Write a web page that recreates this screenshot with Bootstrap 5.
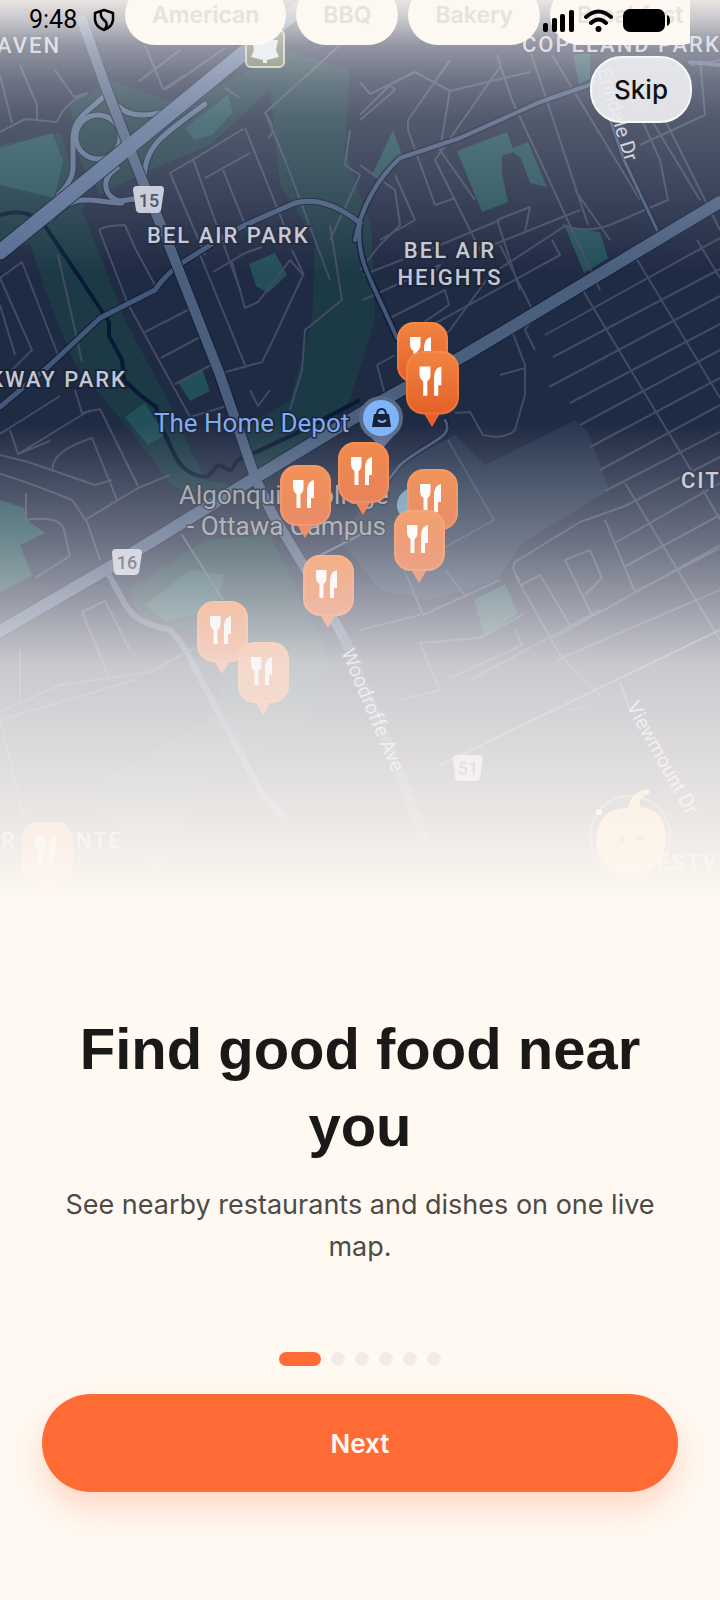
<!DOCTYPE html>
<html lang="en">
<head>
<meta charset="utf-8">
<meta name="viewport" content="width=device-width, initial-scale=1">
<title>Find good food near you</title>
<link href="https://cdn.jsdelivr.net/npm/bootstrap@5.3.0/dist/css/bootstrap.min.css" rel="stylesheet">
<style>
body{background:#fff9f2;color:#1a1918;font-family:Inter,"Liberation Sans",sans-serif}
.map-art{display:block;width:100%;height:auto}
.map-art text{font-family:Roboto,sans-serif}
.area{font-size:22px;font-weight:500;letter-spacing:2px;fill:#c3c7d3;stroke:#1c2438;stroke-width:4;paint-order:stroke}
.place{font-size:26px;stroke:#1c2438;stroke-width:3;paint-order:stroke}
.street{font-size:20px;fill:#c5cad8;stroke:#2a3248;stroke-width:2;paint-order:stroke}
.shield{font-size:18px;font-weight:500;fill:#3a4256;text-anchor:middle}
.minor{fill:none;stroke:#414b63;stroke-width:2;stroke-linejoin:round}
.status{height:40px;padding:0 49px 0 29px}
.clock{font:400 25px/40px Roboto,sans-serif;color:#000}
.chips{height:45px;padding-left:125px;margin-right:30px;gap:10px}
.chip{flex:none;height:60px;padding:0 27px;border:0;border-radius:30px;background:#fdf8f2;color:#e6e2de;font-size:23px;font-weight:600}
.skip-btn{top:56px;right:28px;width:102px;height:67px;border-radius:32px;border:2px solid #f8f8fa;background:rgba(236,237,240,.93);font-size:26px;font-weight:500;color:#111}
.headline{font:700 58px/77px "Liberation Sans",sans-serif;margin:0 0 20px}
.lede{font-size:27px;line-height:42px;color:#4d4a47;margin:0}
.copy{padding:100px 56px 84px}
.dots{gap:10px;margin-bottom:28px}
.dot{width:14px;height:14px;border-radius:7px;background:#f1ece7}
.dot.on{width:42px;background:#ff6b35}
.actions{padding:0 42px 108px}
.next-btn{height:98px;border:0;border-radius:49px;background:#ff6b35;color:#fff9f2;font-size:26px;font-weight:600;box-shadow:0 16px 32px rgba(255,107,53,.24)}
</style>
</head>
<body>
<main class="min-vh-100 d-flex flex-column">
<section class="position-relative overflow-hidden" aria-label="Live map">
<svg class="map-art" viewBox="0 0 720 910" role="img" aria-label="Map with restaurant pins">
<defs>
<linearGradient id="fade" x1="0" y1="0" x2="0" y2="910" gradientUnits="userSpaceOnUse">
<stop offset="0" stop-color="#fff9f2" stop-opacity=".9"/><stop offset=".02" stop-color="#fbf6f4" stop-opacity=".78"/>
<stop offset=".05" stop-color="#f6f2f6" stop-opacity=".54"/><stop offset=".09" stop-color="#f6f2f6" stop-opacity=".36"/>
<stop offset=".13" stop-color="#f6f2f6" stop-opacity=".24"/><stop offset=".22" stop-color="#f6f2f6" stop-opacity=".12"/>
<stop offset=".30" stop-color="#f6f2f6" stop-opacity="0"/><stop offset=".465" stop-color="#f6f2f6" stop-opacity="0"/>
<stop offset=".53" stop-color="#f6f2f6" stop-opacity=".18"/><stop offset=".6" stop-color="#f6f2f4" stop-opacity=".37"/>
<stop offset=".67" stop-color="#f6f2f4" stop-opacity=".6"/><stop offset=".73" stop-color="#f6f3f3" stop-opacity=".79"/>
<stop offset=".8" stop-color="#f8f4f3" stop-opacity=".85"/><stop offset=".88" stop-color="#fbf6f3" stop-opacity=".91"/>
<stop offset=".94" stop-color="#fdf7f2" stop-opacity=".96"/><stop offset=".99" stop-color="#fff9f2"/>
</linearGradient>
<linearGradient id="pinfill" x1="0" y1="0" x2="0" y2="1"><stop offset="0" stop-color="#f18440"/><stop offset="1" stop-color="#e4602a"/></linearGradient>
<g id="pin">
<path d="M16 58L25 73L34 58Z" fill="#e6622b"/>
<rect width="51" height="61" rx="17" fill="url(#pinfill)"/>
<rect x="1" y="1" width="49" height="59" rx="16" fill="none" stroke="#ff9a5c" stroke-opacity=".3" stroke-width="2"/>
<path d="M13 15H23.500V23Q23.500 27 20.500 29V43H16.500V29Q13 27 13 22Z" fill="#fff"/>
<path d="M34 15V33H31V43H27V24Q28 16 34 15Z" fill="#fff"/>
</g>
</defs>
<rect width="720" height="910" fill="#1f2a43"/>
<!-- parks and campus grounds -->
<g fill="#1c3a46">
<path d="M0 145L60 133L85 205L50 240L0 250Z"/>
<path d="M25 228L80 205L100 255L125 320L165 395L205 480L262 490L210 498L172 486L130 430L75 365L45 290Z"/>
<path d="M280 50L350 70L345 150L372 230L375 320L350 400L300 460L250 470L240 430L290 400L312 320L315 240L280 185L270 90Z"/>
<path d="M70 105L110 80L180 105L240 75L285 55L280 80L210 145L150 170L100 195L80 160Z"/>
<path d="M130 590L205 540L270 535L330 660L305 730L210 770L160 880L85 790L215 715L230 640L140 620Z"/>
</g>
<g fill="#234f58">
<path d="M0 148L52 133L63 160L55 198L0 185Z"/><path d="M0 500L24 508L27 520L45 533L20 545L32 576L0 592Z"/>
<path d="M185 128L228 95L233 112L212 135L195 140Z"/>
<path d="M249 264L275 253L287 275L268 293L256 286Z"/>
<path d="M178 382L202 369L210 391L190 401Z"/><path d="M125 417L145 403L165 435L148 445Z"/>
<path d="M393 130L404 160L380 180L372 175Z"/>
<path d="M457 151L507 132L513 148L528 142L547 187L530 183L521 158L513 152L502 156L502 173L508 202L482 212Z"/>
<path d="M565 227L600 232L608 258L584 273Z"/><path d="M573 55L590 53L590 79L579 84Z"/>
<path d="M551 436L570 428L582 459L562 467Z" fill="#2a6068"/><path d="M474 600L505 584L518 614L484 635Z"/>
<path d="M145 605L190 570L225 575L215 610L165 622Z"/>
</g>
<path d="M388 470L455 435L485 465L575 420L588 432L609 490L520 545L497 580L430 600L380 590L340 540Z" fill="#27374f"/>
<!-- creek -->
<g fill="none" stroke="#081a35" stroke-width="4">
<path d="M0 215Q28 206 45 226L78 275L109 322V336L122 360L124 380L140 395L156 407L163 430L175 456Q185 475 205 477C218 472 213 460 225 468C237 476 230 460 243 458L295 434L360 400"/>
</g>
<!-- residential streets -->
<g class="minor">
<path d="M0 75L12 123M20 65L37 105L37 120M55 70L74 97L88 93M0 132L25 119L57 122Q65 102 88 93M145 45L163 89L185 75M138 82L180 50M225 88L240 98M225 48L165 90"/>
<path d="M340 45L265 113Q278 130 268 138M245 128L290 240M250 153L205 178M223 170L248 232M170 173L194 159L243 129M170 173L205 255M265 112L285 160L330 280M193 159L240 290M100 232Q97 226 125 225L135 248L156 287M100 232L128 304"/>
<path d="M0 278L22 262L58 355M0 278L32 350L12 370M0 305L15 355M58 255L75 330L82 362M128 304L190 417M145 332L188 310M161 358L200 337M175 384L215 363M198 250L245 365M213 272L245 253L262 247M232 262L245 308L258 302L290 260L303 275L272 342L262 362L222 373M190 417L230 405M250 390L258 406L270 390"/>
<path d="M350 130L345 165L360 175L330 240M292 250L304 275M330 225L342 300L305 330L302 370L290 410"/>
<path d="M0 434L60 396M10 430L18 454L50 441M75 390L82 413L100 409L138 486M18 454L90 410M53 470Q50 452 92 438L117 500M0 474Q22 480 72 500L87 522L100 560M0 455L28 462L95 485L112 480M26 493V520Q60 515 64 530L70 556L35 578M85 520L138 488L170 475M82 612L105 601L130 650M82 612L110 680M0 712L60 685L150 672L195 648M0 720L25 820M0 720L135 680M20 650V700"/>
<path d="M360 120L395 90L390 85L360 115M360 82L370 94L415 72L450 91L530 72M450 90L440 150L475 200M435 205L455 198M450 60L408 120V130L435 205M500 67L435 160L480 250L580 210M497 55L512 100L600 290M530 50L588 225M552 55L640 200M575 190L610 240M615 60L700 200M700 60L705 115L640 145M690 65L720 60M655 100L720 230"/>
<path d="M360 165L395 190L400 225L380 245L360 270M395 175L415 220L380 240M497 220L530 207L525 232M497 220L520 290M565 226L490 275L450 330L420 355M563 225Q590 235 617 222L668 200L660 160L615 60"/>
<path d="M363 275L440 245L500 220M363 300L440 265L430 280M390 318L445 290L449 305L420 325M405 340L560 255L552 240M500 245L535 315L525 330L535 350M512 331L525 365L525 395L515 430Q505 440 483 435L470 412L455 413M500 375L525 368M377 365L395 355M377 365L385 395"/>
<path d="M582 289L700 485L755 580M635 256L720 398M697 240L720 278M545 335L720 238M553 357L720 269M549 387L720 296M570 403L720 324M580 425L720 350M590 447L720 378M600 470L720 405M605 491L720 432M625 483L720 640M700 485L720 520"/>
<path d="M580 522L625 506L720 457M615 543L720 483M624 567L720 515M635 592L720 548M605 520L635 592M520 580Q510 570 515 562L580 522M515 575L560 655L605 700M520 586L540 575L570 625M565 560L590 550L602 578L585 595M565 560L592 615M550 640L720 545M557 660L720 590M448 440L494 520L440 550M445 570L465 595M400 560L423 615L500 580M420 643L480 638L522 615M420 643L440 690L400 700M515 630L522 645L450 678M570 710L590 705M360 630L420 615M470 680L600 610"/>
</g>
<!-- larger roads -->
<g fill="none" stroke-linecap="round" stroke-linejoin="round">
<g stroke="#111d34" stroke-width="7"><path d="M0 407L50 365L100 318L155 290Q165 275 182 263L215 242L245 225L295 203Q325 195 360 223M355 240Q365 190 400 158L460 138L540 102L595 83M360 223C355 260 372 280 397 338"/><path d="M600 90L624 160L657 230M445 420C455 438 430 440 400 465L365 510" stroke-width="5"/></g>
<g stroke="#43577a" stroke-width="5"><path d="M0 407L50 365L100 318L155 290Q165 275 182 263L215 242L245 225L295 203Q325 195 360 223"/><path d="M690 62L720 65M355 240Q365 190 400 158L460 138L540 102L595 83M360 223C355 260 372 280 397 338" stroke-width="4"/></g>
<path d="M600 90L624 160L657 230M445 420C455 438 430 440 400 465L365 510" stroke="#43577a" stroke-width="3"/>
<g stroke="#162238" stroke-width="7"><path d="M106 94C90 112 73 115 73 140V165Q74 180 58 195M117 105C130 119 150 117 172 109M205 104C162 136 145 145 144 178M117 168C98 180 106 199 120 201L134 199M50 220C75 190 90 202 122 203"/><circle cx="98" cy="137" r="22"/></g>
<g stroke="#556a8b" stroke-width="5"><path d="M106 94C90 112 73 115 73 140V165Q74 180 58 195M117 105C130 119 150 117 172 109M205 104C162 136 145 145 144 178M117 168C98 180 106 199 120 201L134 199M50 220C75 190 90 202 122 203"/><circle cx="98" cy="137" r="22"/></g>
<g stroke="#14203a" stroke-width="14"><path d="M82 20L105 85L140 175L165 235L220 375L256 480L273 515L305 568L345 640" stroke-width="12"/><path d="M0 252L135 142L245 52L310 0" stroke-width="17"/><path d="M-5 634L105 570L240 487L380 402L465 355L720 202"/></g>
<path d="M82 20L105 85L140 175L165 235L220 375L256 480L273 515L305 568L345 640" stroke="#4a5f7e" stroke-width="10"/>
<path d="M345 640L390 750L425 840" stroke="#3d4e68" stroke-width="10"/>
<path d="M0 252L135 142L245 52L310 0" stroke="#566d92" stroke-width="15"/>
<path d="M-5 634L105 570L240 487L380 402L465 355L720 202" stroke="#4a5f7e" stroke-width="12"/>
<path d="M107 572C130 610 125 620 170 630C187 645 205 690 220 715L260 790L285 820" stroke="#465876" stroke-width="6"/>
<path d="M305 563L360 535M440 765L720 630M620 683L630 710" stroke="#59667e" stroke-width="2"/>
<path d="M182 535L223 600" stroke="#46596f" stroke-width="2"/>
</g>
<!-- road shields -->
<g fill="#c3c9d6"><path d="M137 186H161Q164 186 164 190L161 210Q160 213 157 213H140Q137 213 136 210L133 190Q133 186 137 186Z"/><path d="M116 549H138Q142 549 142 553L139 572Q138 575 135 575H118Q115 575 114 572L112 553Q112 549 116 549Z"/><path d="M457 755H479Q483 755 483 759L480 778Q479 781 476 781H459Q456 781 455 778L453 759Q453 755 457 755Z"/></g>
<text class="shield" x="149" y="207">15</text><text class="shield" x="127" y="569">16</text><text class="shield" x="468" y="775">51</text>
<rect x="246" y="30" width="38" height="37" rx="5" fill="#667052" stroke="#c4cba6" stroke-width="2"/>
<path d="M252 40H278L276 50L279 57L267 60V63H263V60L251 57L254 50Z" fill="#e4edf0"/>
<!-- map labels -->
<text class="area" x="61" y="53" text-anchor="end">AVEN</text>
<text class="area" x="522" y="52">COPELAND PARK</text>
<text class="area" x="147" y="243">BEL AIR PARK</text>
<text class="area" x="450" y="258" text-anchor="middle">BEL AIR</text>
<text class="area" x="450" y="285" text-anchor="middle">HEIGHTS</text>
<text class="area" x="127" y="387" text-anchor="end">KWAY PARK</text>
<text class="area" x="681" y="488">CIT</text>
<text class="area" x="1" y="848">R</text><text class="area" x="123" y="848" text-anchor="end">NTE</text>
<text class="area" x="657" y="870">ESTV</text>
<text class="place" x="154" y="432" fill="#7cabef">The Home Depot</text>
<text class="place" x="179" y="504" fill="#9299a2">Algonquin College</text>
<text class="place" x="187" y="535" fill="#9299a2">- Ottawa Campus</text>
<text class="street" transform="translate(597 70) rotate(73)">Erindale Dr</text>
<text class="street" transform="translate(341 652) rotate(67)">Woodroffe Ave</text>
<text class="street" transform="translate(626 706) rotate(61)">Viewmount Dr</text>
<!-- points of interest -->
<path d="M365 431L382 449L398 431Z" fill="#5d6f91"/><circle cx="381" cy="418" r="22" fill="#5b6989"/><circle cx="381" cy="418" r="18" fill="#7db4fa"/>
<path d="M374 414H389L391 427H372Z" fill="#162136"/><path d="M377 415Q377 409 381.500 409Q386 409 386 415" fill="none" stroke="#162136" stroke-width="2"/><path d="M378 420Q382 424 386 420" fill="none" stroke="#7db4fa" stroke-width="2"/>
<circle cx="414" cy="505" r="17" fill="#6c98b5"/>
<use href="#pin" x="397" y="322"/><g transform="translate(406 351) scale(1.040)"><use href="#pin"/></g>
<use href="#pin" x="407" y="469"/><use href="#pin" x="394" y="510"/><use href="#pin" x="338" y="442"/><use href="#pin" x="280" y="465"/>
<use href="#pin" x="303" y="555"/><use href="#pin" x="197" y="601"/><use href="#pin" x="238" y="642"/><use href="#pin" x="22" y="822"/>
<circle cx="630" cy="836" r="40" fill="none" stroke="#fff" stroke-opacity=".4" stroke-width="2"/>
<path d="M628 808Q630 793 646 789Q655 792 644 796Q638 801 640 807Q665 808 666 838Q664 874 630 874Q597 872 596 840Q599 807 628 808Z" fill="#ffc36b"/><circle cx="622" cy="839" r="3" fill="#805030"/><circle cx="640" cy="839" r="3" fill="#805030"/><circle cx="599" cy="812" r="3" fill="#fff"/>
<rect width="720" height="910" fill="url(#fade)"/>
</svg>
<div class="chips position-absolute top-0 start-0 end-0 d-flex align-items-end overflow-hidden">
<button class="chip" type="button">American</button><button class="chip" type="button">BBQ</button><button class="chip" type="button">Bakery</button><button class="chip" type="button">Breakfast</button>
</div>
<header class="status position-absolute top-0 start-0 end-0 d-flex align-items-center justify-content-between">
<div class="d-flex align-items-center gap-3"><span class="clock">9:48</span>
<svg width="22" height="24" viewBox="0 0 22 24" fill="none" stroke="#000" stroke-width="2.500" stroke-linejoin="round" aria-hidden="true"><path d="M8 3L11 2L20 5V12Q19 19 11 22Q3 19 2 12V5L8 3Q7 8 10 11L13 14Q15 18 11 22"/></svg></div>
<svg width="128" height="24" viewBox="0 0 128 24" aria-hidden="true">
<rect x="0" y="15" width="5" height="9" rx="2"/><rect x="9" y="10" width="5" height="14" rx="2"/><rect x="17" y="6" width="5" height="18" rx="2"/><rect x="26" y="2" width="5" height="22" rx="2"/>
<g fill="none" stroke="#000" stroke-width="4" stroke-linecap="round"><path d="M43 9Q55.500 -2 68 9M48 15Q55.500 8 63 15"/></g><circle cx="55.500" cy="21" r="3"/>
<rect x="80" y="1" width="42" height="23" rx="7"/><path d="M124 7Q127 8 127 12.500Q127 17 124 18Z"/>
</svg>
</header>
<button class="skip-btn position-absolute p-0" type="button">Skip</button>
</section>
<section class="copy text-center">
<h1 class="headline">Find good food near you</h1>
<p class="lede">See nearby restaurants and dishes on one live map.</p>
</section>
<div class="dots d-flex justify-content-center" role="group" aria-label="Step 1 of 6"><span class="dot on"></span><span class="dot"></span><span class="dot"></span><span class="dot"></span><span class="dot"></span><span class="dot"></span></div>
<div class="actions"><button class="next-btn w-100" type="button">Next</button></div>
</main>
<script src="https://cdn.jsdelivr.net/npm/bootstrap@5.3.0/dist/js/bootstrap.bundle.min.js"></script>
</body>
</html>
